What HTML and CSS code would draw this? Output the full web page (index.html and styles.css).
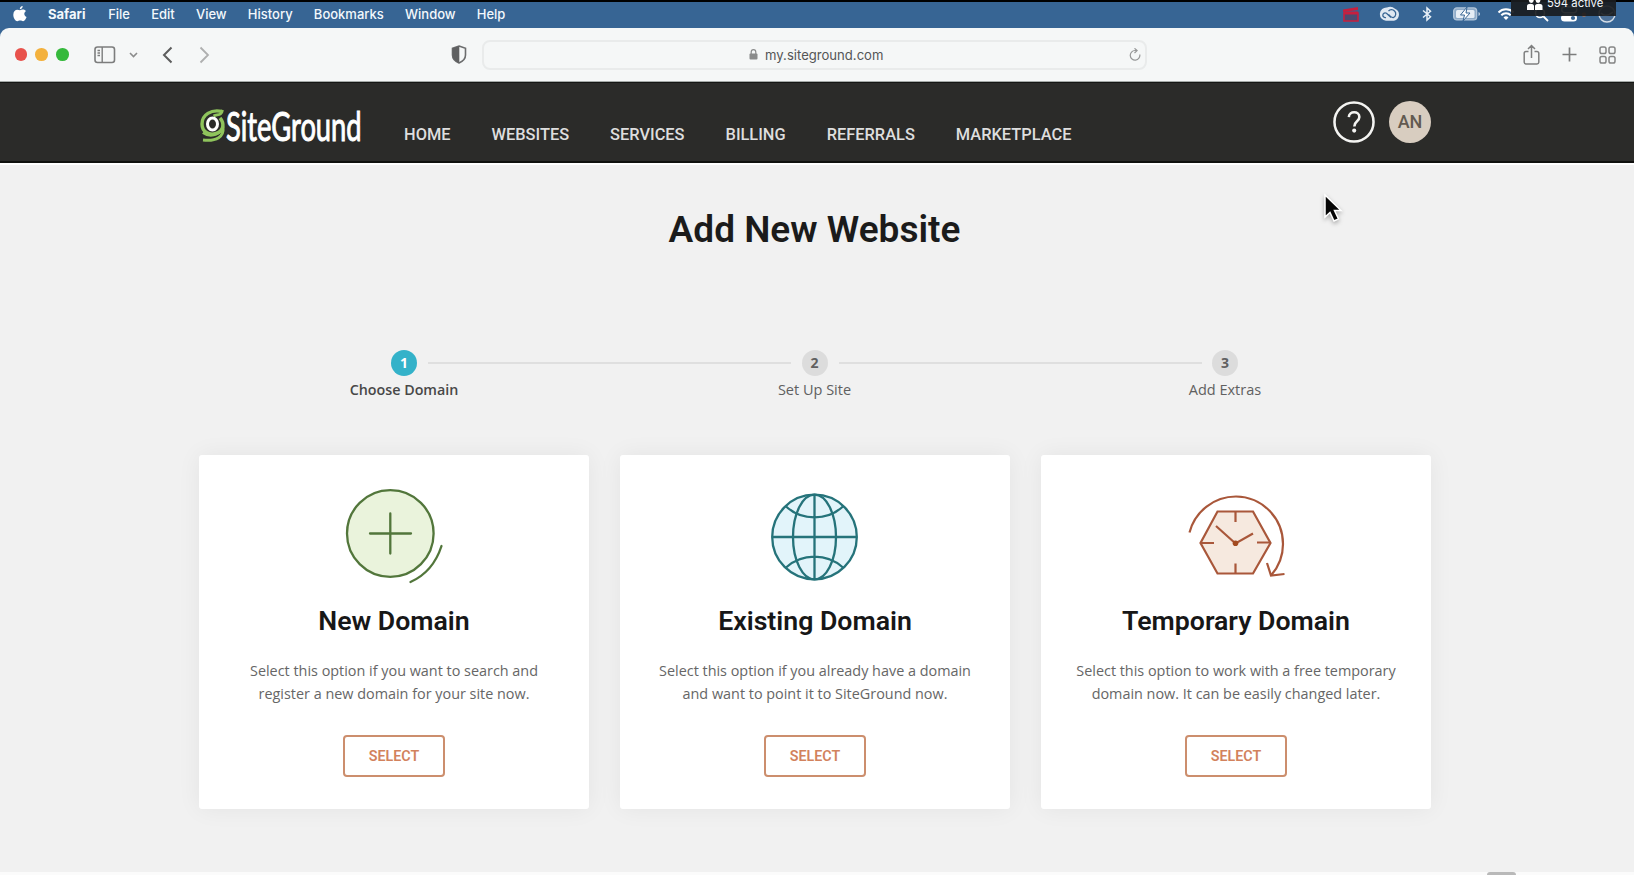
FILE: index.html
```html
<!DOCTYPE html>
<html lang="en">
<head>
<meta charset="utf-8">
<title>Add New Website</title>
<link rel="stylesheet" href="styles.css">
</head>
<body>
<header class="menubar">
  <svg class="apple" width="14" height="16" viewBox="0 0 14 16"><path fill="#fff" d="M9.7 0c.1 1.600-1.200 3.200-2.900 3.300C6.600 1.700 8.100.2 9.700 0zM7 4.200c.8 0 1.700-.7 3-.7 1.200 0 2.300.6 3 1.500-2.500 1.500-2.100 4.900.6 6-.6 1.600-2 4.200-3.500 4.200-1.100 0-1.500-.6-2.900-.6s-1.900.6-2.900.6C2.500 15.300.3 12 .3 8.700c0-3.200 2-4.900 4-4.900 1.100 0 2.100.4 2.700.4z"/></svg>
  <nav class="menus">
    <span class="menu menu-app">Safari</span><span class="menu">File</span><span class="menu">Edit</span><span class="menu">View</span><span class="menu">History</span><span class="menu">Bookmarks</span><span class="menu">Window</span><span class="menu">Help</span>
  </nav>
  <div class="tray">
    <svg width="18" height="16" viewBox="0 0 18 16"><path d="M1 3.500 16 1v3L1 6z" fill="#c71f3e"/><path d="M2 7h14v8H2z" fill="#4c4a70" stroke="#c71f3e" stroke-width="1.600"/><path d="M2 7h14" stroke="#c71f3e" stroke-width="3"/></svg>
    <svg class="t-cc" width="22" height="16" viewBox="0 0 22 16"><path d="M8 1.500a7.300 6.700 0 0 1 8 1.200 6.300 6.300 0 0 1-1 12H7A6.600 6.600 0 0 1 8 1.500z" fill="#dfe8f2"/><path d="M12 11.500 7.500 7.200a2.400 2.400 0 1 0-.5 4.300M9.500 5.200a3.800 3.800 0 0 1 6-.2 4 4 0 0 1-1 6.500c-2 .5-3-1-5-3" fill="none" stroke="#376594" stroke-width="1.300"/></svg>
    <svg class="t-bt" width="10" height="16" viewBox="0 0 10 16"><path d="m1 4.500 7.500 6.300L5 14V2l3.500 3.200L1 11.500" fill="none" stroke="#e9f1f8" stroke-width="1.500"/></svg>
    <svg class="t-bat" width="28" height="14" viewBox="0 0 28 14"><rect x=".7" y=".9" width="23" height="12" rx="3.200" fill="#8fabc8" stroke="#b4c7db" stroke-width="1.300"/><rect x="3" y="3" width="18.500" height="8" rx="1.500" fill="#e6edf5"/><path d="M14 0 7.500 8h4L10 14l7-8h-4z" fill="#fff" stroke="#376594"/><path d="M25.500 5v4c2-.8 2-3.200 0-4z" fill="#c2d2e2"/></svg>
    <svg class="t-wifi" width="18" height="14" viewBox="0 0 18 14"><path d="M1.500 5.500a10.500 10.500 0 0 1 15 0M4.300 8.200a6.600 6.600 0 0 1 9.400 0" fill="none" stroke="#fff" stroke-width="2"/><path d="M6.500 10.500a3.600 3.600 0 0 1 5 0L9 13z" fill="#fff"/></svg>
    <svg class="t-find" width="15" height="15" viewBox="0 0 15 15"><circle cx="6" cy="6" r="4.500" fill="none" stroke="#fff" stroke-width="1.500"/><path d="m9.500 9.500 4.500 4.500" stroke="#fff" stroke-width="1.800"/></svg>
    <svg class="t-ctl" width="26" height="16" viewBox="0 0 26 16"><rect x=".7" y=".7" width="15" height="6" rx="3" fill="none" stroke="#fff" stroke-width="1.400"/><rect x="0" y="8.500" width="16" height="7" rx="3.500" fill="#fff"/><circle cx="12" cy="12" r="2.100" fill="#376594"/><circle cx="23" cy="8.500" r="2.300" fill="#c5794a"/></svg>
    <svg class="t-siri" width="18" height="18" viewBox="0 0 18 18"><circle cx="9" cy="9" r="8" fill="#4d7198" stroke="#d5dde6" stroke-width="1.500"/><path d="M3 8c3 3.500 7 3 12-1" fill="none" stroke="#fff" stroke-width="1.500"/></svg>
  </div>
  <div class="viewers">
    <svg width="16" height="12" viewBox="0 0 16 12"><circle cx="4.300" cy="2.500" r="2.400" fill="#fff"/><circle cx="11" cy="2.500" r="2.400" fill="#fff"/><path d="M0 12V8c0-3 7-3 7 0v4zM8 12V8c0-3 7.500-3 7.500 0v4z" fill="#fff"/></svg>
    <span>594 active</span>
  </div>
</header>

<div class="toolbar">
  <div class="lights"><i class="light red"></i><i class="light amber"></i><i class="light green"></i></div>
  <svg class="i-side" width="22" height="18" viewBox="0 0 22 18"><rect x="1" y="1" width="19.500" height="15.500" rx="2.500" fill="none" stroke="#7c7d7d" stroke-width="1.600"/><path d="M8.200 1v15.500M3.500 4.500H6M3.500 7H6M3.500 9.500H6" stroke="#7c7d7d" stroke-width="1.400"/></svg>
  <svg class="i-down" width="9" height="6" viewBox="0 0 9 6"><path d="m1 1 3.500 3.500L8 1" fill="none" stroke="#8b8c8c" stroke-width="1.600"/></svg>
  <svg class="i-back" width="11" height="18" viewBox="0 0 11 18"><path d="M9.500 1.500 2 9l7.500 7.500" fill="none" stroke="#5c5d5d" stroke-width="2"/></svg>
  <svg class="i-fwd" width="11" height="18" viewBox="0 0 11 18"><path d="M1.500 1.500 9 9l-7.500 7.500" fill="none" stroke="#aeafaf" stroke-width="1.800"/></svg>
  <svg class="i-shield" width="16" height="19" viewBox="0 0 16 19"><path d="M8 1 14.500 3.200V10c0 4-3 6.500-6.500 8-3.500-1.500-6.500-4-6.500-8V3.200z" fill="none" stroke="#6c6d6e" stroke-width="1.600"/><path d="M8.300 1 1.500 3.200V10c0 4 3 6.500 6.800 8z" fill="#5f6061"/></svg>
  <div class="address">
    <svg width="9" height="11" viewBox="0 0 9 11"><rect x=".5" y="4.500" width="8" height="6" rx="1" fill="#8a8b8b"/><path d="M2.200 5V3a2.300 2.300 0 0 1 4.600 0v2" fill="none" stroke="#8a8b8b" stroke-width="1.200"/></svg>
    <span>my.siteground.com</span>
    <svg class="reload" width="12" height="13" viewBox="0 0 12 13"><path d="M10.800 6.500A4.800 4.800 0 1 1 6 2.500h1.500M5.500.3l2.600 2.300L5.500 5" fill="none" stroke="#969797" stroke-width="1.200"/></svg>
  </div>
  <div class="tools">
    <svg width="17" height="22" viewBox="0 0 17 22"><path d="M5.500 7.500H3a1.800 1.800 0 0 0-1.800 1.800v9A1.800 1.800 0 0 0 3 20h11a1.800 1.800 0 0 0 1.800-1.700v-9A1.800 1.800 0 0 0 14 7.500h-2.500M8.500 14V1.500M5 5l3.500-3.500L12 5" fill="none" stroke="#7f8080" stroke-width="1.500"/></svg>
    <svg width="15" height="15" viewBox="0 0 15 15"><path d="M7.500.5v14M.5 7.500h14" stroke="#7c7d7d" stroke-width="1.700"/></svg>
    <svg width="17" height="18" viewBox="0 0 17 18"><g fill="none" stroke="#858686" stroke-width="1.500"><rect x="1" y="1" width="6" height="6.500" rx="1.800"/><rect x="10" y="1" width="6" height="6.500" rx="1.800"/><rect x="1" y="10.500" width="6" height="6.500" rx="1.800"/><rect x="10" y="10.500" width="6" height="6.500" rx="1.800"/></g></svg>
  </div>
</div>

<div class="sitebar">
  <svg class="logo" width="166" height="50" viewBox="0 -4 166 50">
    <path d="M23 4.500C12 2 3 8 3 17c0 8 7 11.500 14 9.500 8-2 8.500-10.500 4-15.500" fill="none" stroke="#8fc45c" stroke-width="3.400"/>
    <path d="M23.500 3c-1 6-5 4-9 6" fill="none" stroke="#8fc45c" stroke-width="2.800"/>
    <path d="M4 25.500c7 5 15 3 20-5 1 9-6 14-20 12.500" fill="none" stroke="#8fc45c" stroke-width="3"/>
    <ellipse cx="13.500" cy="17" rx="5" ry="6" fill="#2b2b29" stroke="#fff" stroke-width="3"/>
    <g transform="translate(27 34) scale(.685 1)"><text class="wordmark" textLength="198" lengthAdjust="spacingAndGlyphs">SiteGround</text></g>
  </svg>
  <nav class="nav"><a>HOME</a><a>WEBSITES</a><a>SERVICES</a><a>BILLING</a><a>REFERRALS</a><a>MARKETPLACE</a></nav>
  <div class="account">
    <svg width="42" height="42" viewBox="0 0 43 43"><circle cx="21.500" cy="21.500" r="20" fill="none" stroke="#f4f4f2" stroke-width="2.600"/><path d="M16.200 16.500c.2-6.500 10.800-6.500 10.800 0 0 4.500-5.200 4-5.200 9.500" fill="none" stroke="#f4f4f2" stroke-width="2.600"/><circle cx="21.700" cy="30.300" r="2.100" fill="#f4f4f2"/></svg>
    <span class="avatar">AN</span>
  </div>
</div>

<main class="page">
  <h1>Add New Website</h1>
  <ol class="steps">
    <li class="step active"><b>1</b><span>Choose Domain</span></li>
    <li class="rule"></li>
    <li class="step"><b>2</b><span>Set Up Site</span></li>
    <li class="rule"></li>
    <li class="step"><b>3</b><span>Add Extras</span></li>
  </ol>
  <section class="cards">
    <article class="card">
      <svg class="art" width="130" height="110" viewBox="0 0 130 110"><g fill="none" stroke="#52763b" stroke-width="2.300" stroke-linecap="round"><circle cx="61.300" cy="53.500" r="43.300" fill="#eaf3dc"/><path d="M61.300 33.500v40M41 53.500h41M112.500 66C107 83 96 95.500 81.500 102"/></g></svg>
      <h2>New Domain</h2>
      <p>Select this option if you want to search and<br>register a new domain for your site now.</p>
      <button>SELECT</button>
    </article>
    <article class="card">
      <svg class="art" width="130" height="110" viewBox="0 0 130 110"><g fill="none" stroke="#25737a" stroke-width="2.300"><circle cx="64.500" cy="57" r="42.300" fill="#e2f4fa"/><ellipse cx="64.500" cy="57" rx="21.500" ry="42.300"/><path d="M64.500 15v84M22 57h85M36 26.500c16 14.500 41 14.500 57 0M36 87.500c16-14.500 41-14.500 57 0"/></g></svg>
      <h2>Existing Domain</h2>
      <p>Select this option if you already have a domain<br>and want to point it to SiteGround now.</p>
      <button>SELECT</button>
    </article>
    <article class="card">
      <svg class="art" width="130" height="110" viewBox="0 0 130 110"><g fill="none" stroke="#a9573a" stroke-width="2.200"><path d="M46.500 31.500h35.500L99.500 63 82 93.500H46.500L29.500 63z" fill="#f6e9df"/><path d="M64.500 31.500V42M64.500 83.500v10M29.500 63H43M86 62.500h13.500M45 46l19.500 17.500L82 53.500M18.500 52.500A48 48 0 0 1 65 16.500 47.500 47.500 0 0 1 112 64c0 12-4.500 23-12 31.500M96 83l4 12.500L113.500 94"/></g><circle cx="64.500" cy="63.300" r="2.800" fill="#a34b20"/></svg>
      <h2>Temporary Domain</h2>
      <p>Select this option to work with a free temporary<br>domain now. It can be easily changed later.</p>
      <button>SELECT</button>
    </article>
  </section>
  <div class="bottom"><i></i></div>
</main>
<svg class="cursor" width="22" height="32" viewBox="0 0 22 32"><path d="M3 2v22l5-4.500 4 8.500 4.500-2-4-8.500H19z" fill="#050505" stroke="#fff" stroke-width="1.500"/></svg>
</body>
</html>
```
FILE: styles.css
```css
* { box-sizing: border-box; }
body { margin: 0; width: 1634px; height: 875px; overflow: hidden; position: relative; background: #376594; font-family: "Open Sans", sans-serif; }
svg { display: block; flex: none; }

.menubar { height: 28px; border-top: 2px solid #000; background: #376594; display: flex; align-items: center; padding: 0 18px 2px 13px; position: relative; color: #f3f8fc; }
.menus { display: flex; gap: 21.200px; margin: 0 0 0 21px; font: 500 13px/16px Inter, sans-serif; white-space: nowrap; }
.menu-app { font-weight: 700; margin-right: 1.500px; }
.tray { display: flex; align-items: center; margin: 0 0 0 auto; }
.t-cc { margin-left: 19px; }
.t-bt { margin-left: 21px; }
.t-bat { margin-left: 21px; }
.t-wifi { margin-left: 16px; }
.t-find { margin-left: 19px; }
.t-ctl { margin-left: 12px; }
.t-siri { margin-left: 11px; }
.viewers { position: absolute; left: 1511px; top: -2px; width: 105px; height: 16px; overflow: hidden; background: rgba(25, 28, 32, .92); display: flex; padding-left: 16px; gap: 4px; font: 400 11.300px/14px Inter, sans-serif; }
.viewers svg { margin-top: -2px; }
.viewers span { margin-top: -4.500px; white-space: nowrap; }

.toolbar { height: 54px; background: #f5f7f7; border-radius: 9px 9px 0 0; border-bottom: 1px solid #a5aaa8; display: flex; align-items: center; padding: 0 18px 0 14.500px; }
.lights { display: flex; gap: 8px; }
.light { width: 12.700px; height: 12.700px; border-radius: 50%; }
.red { background: #e8524c; }
.amber { background: #f3b13d; }
.green { background: #35b93c; }
.i-side { margin-left: 25.500px; }
.i-down { margin-left: 13px; }
.i-back { margin-left: 24px; }
.i-fwd { margin-left: 26px; }
.i-shield { margin-left: 241px; }
.address { width: 665px; height: 30px; margin-left: 15px; border: 2px solid #e9ebeb; border-radius: 8px; display: flex; align-items: center; padding: 0 4px 0 265px; color: #545556; font: 400 13.100px/18px Inter, sans-serif; }
.address span { margin-left: 7px; }
.reload { margin-left: auto; }
.tools { margin-left: auto; display: flex; align-items: center; gap: 22px; }

.sitebar { height: 81px; background: #2b2b29; border-top: 1px solid #151614; border-bottom: 2px solid #10110f; display: flex; padding-left: 199px; }
.logo { margin: 20px 0 0 0; }
.wordmark { font: 400 40px Lato, sans-serif; fill: #fff; stroke: #fff; stroke-width: 1px; }
.nav { display: flex; gap: 41px; margin: 41px 0 0 39px; font: 500 16.400px/22px Roboto, sans-serif; color: #dedede; }
.account { display: flex; gap: 14px; margin: 18px 203px 0 auto; }
.avatar { width: 42px; height: 42px; border-radius: 50%; background: #d8cdc0; color: #625a51; text-align: center; font: 500 18px/42px Roboto, sans-serif; }

.page { height: 712px; background: #f1f1f1; border-top: 2px solid #fff; padding: 43px 0 0 199px; position: relative; }
h1 { margin: 0; width: 1231px; text-align: center; color: #1b1b1b; font: 600 37px/44px Roboto, sans-serif; }
.steps { list-style: none; margin: 98px 0 0; padding: 0 0 0 140px; display: flex; width: 1232px; height: 54px; }
.step { width: 130px; text-align: center; color: #606060; font-size: 14.500px; line-height: 20px; flex: none; }
.step b { display: block; width: 26px; height: 26px; margin: 0 auto 4px; border-radius: 50%; background: #dcdcdc; color: #606060; font: 700 14px/26px "Open Sans", sans-serif; }
.step.active { color: #484848; font-weight: 600; font-size: 14.300px; }
.step.active b { background: #34b2c9; color: #fff; }
.rule { width: 363px; height: 2px; background: #dfdfdf; margin: 12px -41.750px 0 -40.750px; flex: none; }
.cards { display: grid; grid-template-columns: repeat(3, 390px); gap: 31px; margin-top: 51px; width: 1232px; }
.card { height: 354px; background: #fff; border-radius: 3px; box-shadow: 0 0 24px rgba(0, 0, 0, .06); display: flex; flex-direction: column; align-items: center; padding-top: 25px; }
h2 { margin: 13.500px 0 0; color: #171717; font: 600 26.700px/34px Roboto, sans-serif; }
p { margin: 22.500px 0 0; text-align: center; color: #666; font-size: 14.400px; line-height: 22.600px; white-space: nowrap; }
button { margin: 30px 0 0; width: 102px; height: 42px; padding: 0; background: #fff; border: 2px solid #cc8e6d; border-radius: 4px; color: #d2825d; font: 600 14.300px/20px Roboto, sans-serif; }
.bottom { position: absolute; left: 0; right: 0; bottom: 0; height: 3px; background: #fbfbfb; }
.bottom i { display: block; margin-left: 1487px; width: 29px; height: 3px; border-radius: 4px 4px 0 0; background: #b9b9b9; }
.cursor { position: absolute; left: 1322px; top: 193px; filter: drop-shadow(0 2px 2px rgba(0, 0, 0, .3)); }
```
